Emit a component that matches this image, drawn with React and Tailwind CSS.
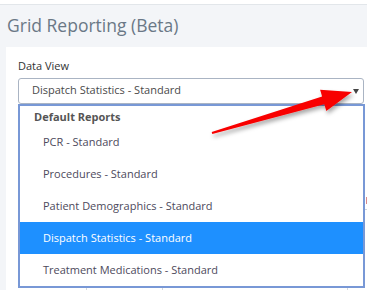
export default function App() {
  const items = [
    "PCR - Standard",
    "Procedures - Standard",
    "Patient Demographics - Standard",
    "Dispatch Statistics - Standard",
    "Treatment Medications - Standard",
  ];
  return (
    <div className="relative w-[367px] h-[290px] overflow-hidden bg-[#f3f5f8] font-['Open_Sans',sans-serif]">
      <div className="h-[5px] bg-white border-b border-[#e2e6ea]" />
      <div className="pl-[7px] pt-[6px] h-[42px] text-[17.5px] leading-[28px] text-[#6a7886]">Grid Reporting (Beta)</div>
      <div className="ml-[6px] h-[300px] bg-white pl-[12px] pt-[11px] relative">
        <div className="text-[11px] leading-[16px] text-[#333]">Data View</div>
        <div className="relative mt-[4px] w-[346px] h-[26px] border border-[#aab4c3] rounded-[3px] pl-[13px] pt-[3px] text-[11px] leading-[16px] text-[#4a4a4a]">
          Dispatch Statistics - Standard
          <span className="absolute right-[4px] top-[10px] w-0 h-0 border-l-[3.5px] border-r-[3.5px] border-t-[5px] border-l-transparent border-r-transparent border-t-[#444]" />
        </div>
        <div className="w-[347px] border-2 border-[#7898d6] bg-white text-[11px] leading-[16px]">
          <div className="h-[20px] pt-[3px] pl-[14px] font-bold text-[#555]">Default Reports</div>
          {items.map((t, i) => (
            <div
              key={t}
              className={
                i === 3
                  ? "h-[32px] flex items-center pl-[23px] bg-[#1e90ff] text-white"
                  : "h-[32px] flex items-center pl-[23px] text-[#4d4a5c]"
              }
            >
              {t}
            </div>
          ))}
        </div>
        <div className="flex h-[4px]">
          <div className="w-[69px] border-r border-[#d4d8de]" />
          <div className="w-[76px] border-r border-[#d4d8de]" />
          <div className="w-[185px] border-r border-[#d4d8de]" />
        </div>
        <div className="absolute left-[360px] top-[150px] w-[1px] h-[7px] bg-[#d98a8a]" />
        <div className="absolute left-[359px] top-[162px] w-[2px] h-[1px] bg-[#cfd4da]" />
      </div>
      <svg className="absolute left-0 top-0" width="367" height="290" viewBox="0 0 367 290">
        <defs>
          <filter id="sh" x="-20%" y="-50%" width="140%" height="200%">
            <feDropShadow dx="1.5" dy="3" stdDeviation="2" floodColor="#000" floodOpacity="0.35" />
          </filter>
        </defs>
        <polygon
          filter="url(#sh)"
          fill="#f80000"
          points="211.7,132 322.1,96.6 320.1,89.8 352,92 326.3,111 324.3,104.2 212.3,134"
        />
      </svg>
    </div>
  );
}
